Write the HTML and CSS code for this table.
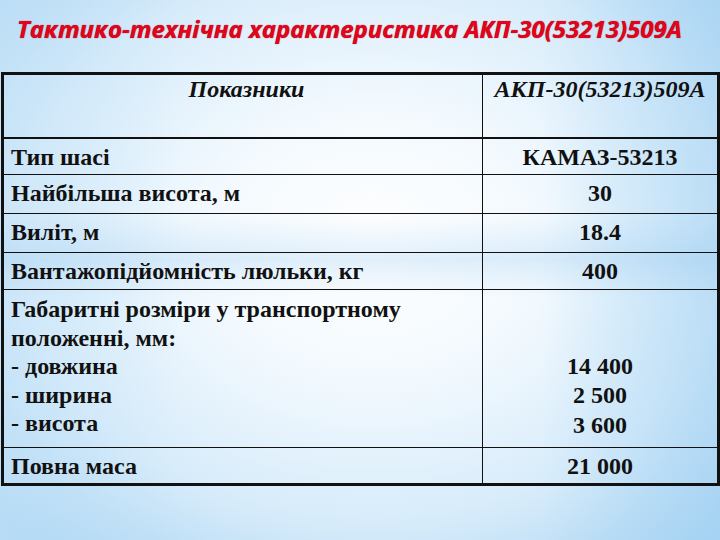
FILE: index.html
```html
<!DOCTYPE html>
<html lang="uk">
<head>
<meta charset="utf-8">
<title>Тактико-технічна характеристика АКП-30(53213)509А</title>
<link rel="stylesheet" href="styles.css">
</head>
<body>
<div class="slide">
  <h1 class="title">Тактико-технічна характеристика АКП-30(53213)509А</h1>
  <table class="spec">
    <tr class="row-head">
      <th class="c-name">Показники</th>
      <th class="c-val">АКП-30(53213)509А</th>
    </tr>
    <tr class="row-1">
      <td class="c-name">Тип шасі</td>
      <td class="c-val">КАМАЗ-53213</td>
    </tr>
    <tr class="row-2">
      <td class="c-name">Найбільша висота, м</td>
      <td class="c-val">30</td>
    </tr>
    <tr class="row-3">
      <td class="c-name">Виліт, м</td>
      <td class="c-val">18.4</td>
    </tr>
    <tr class="row-4">
      <td class="c-name">Вантажопідйомність люльки, кг</td>
      <td class="c-val">400</td>
    </tr>
    <tr class="row-5">
      <td class="c-name c-multi">Габаритні розміри у транспортному положенні, мм:<br>- довжина<br>- ширина<br>- висота</td>
      <td class="c-val c-bottom">14 400<br>2 500<br>3 600</td>
    </tr>
    <tr class="row-6">
      <td class="c-name">Повна маса</td>
      <td class="c-val">21 000</td>
    </tr>
  </table>
</div>
</body>
</html>
```

FILE: styles.css
```css
html, body {
  margin: 0;
  padding: 0;
}
body {
  width: 720px;
  height: 540px;
  overflow: hidden;
}
.slide {
  width: 720px;
  height: 540px;
  box-sizing: border-box;
  padding-top: 14px;
  background:
    linear-gradient(180deg, rgba(255,255,255,0) 0%, rgba(255,255,255,0) 40%, rgba(150,200,240,0.28) 48%, rgba(255,255,255,0) 55%, rgba(255,255,255,0) 100%),
    linear-gradient(90deg, rgba(200,228,248,0.5) 0%, rgba(255,255,255,0) 25%, rgba(255,255,255,0) 75%, rgba(160,208,242,0.5) 100%),
    radial-gradient(ellipse 70% 75% at 52% 45%, #ffffff 0%, #f2f9fe 35%, #d6ebfa 70%, #a8d4f3 100%);
}
.title {
  margin: 0 0 0 17px;
  height: 58px;
  font-family: "Open Sans", "DejaVu Sans", sans-serif;
  font-style: italic;
  font-weight: 700;
  font-size: 24px;
  line-height: 30px;
  color: #e3041b;
  text-shadow: 0 0 1px #8a0010;
  white-space: nowrap;
}
.spec {
  width: 719px;
  margin-left: 1px;
  border-collapse: collapse;
  border: 3px solid #111;
  font-family: "Liberation Serif", "Times New Roman", serif;
  font-weight: 700;
  font-size: 24px;
  line-height: 28.6px;
  color: #111;
}
.spec th, .spec td {
  border: 1px solid #111;
  padding: 0;
  vertical-align: top;
}
.spec th {
  font-style: italic;
  font-weight: 700;
  text-align: center;
  padding-top: 0;
}
.row-head th {
  border-bottom: 2px solid #111;
}
.c-name {
  width: 471px;
  text-align: left;
  padding-left: 7px !important;
}
.row-head .c-name {
  text-align: center;
}
.c-val {
  text-align: center;
}
.spec td {
  padding-top: 4px;
}
.spec td.c-multi {
  line-height: 28.6px;
  padding-top: 5px;
}
.spec td.c-bottom {
  line-height: 29.5px;
  vertical-align: bottom;
  padding-top: 0;
  padding-bottom: 7px;
}
.row-head { height: 64px; }
.row-1 { height: 37px; }
.row-2 { height: 39px; }
.row-3 { height: 39px; }
.row-4 { height: 37px; }
.row-5 { height: 158px; }
.row-6 { height: 37px; }
```
